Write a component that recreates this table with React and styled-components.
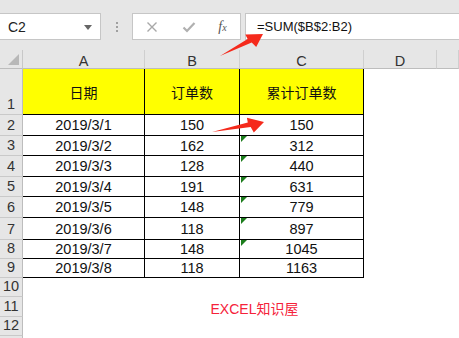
import React from 'react';
import styled, { createGlobalStyle, css } from 'styled-components';

const GlobalStyle = createGlobalStyle`
  html, body {
    margin: 0;
    padding: 0;
    background: #fff;
  }
`;

const FONT = `"Liberation Sans", "Noto Sans CJK SC", Arial, sans-serif`;
const COLS = [122, 95, 124, 73];
const ROW_HEIGHTS = [46, 21, 20, 21, 20, 21, 22, 19, 19, 19, 20, 19, 19];

const Page = styled.div`
  position: relative;
  width: 459px;
  height: 338px;
  overflow: hidden;
  background: #fff;
  font-family: ${FONT};
  color: #111;
`;

const Toolbar = styled.div`
  height: 50px;
  box-sizing: border-box;
  padding-top: 13px;
  background: #e6e6e6;
  display: flex;
  align-items: flex-start;
`;

const Box = styled.div`
  height: 27px;
  box-sizing: border-box;
  border: 1px solid #c6c6c6;
  background: #fff;
`;

const NameBox = styled(Box)`
  width: 102px;
  margin-left: -1px;
  display: flex;
  align-items: center;
  justify-content: space-between;
  padding: 0 8px 0 8px;
  font-size: 14px;
  color: #222;
`;

const DropArrow = styled.span`
  width: 0;
  height: 0;
  border-left: 4px solid transparent;
  border-right: 4px solid transparent;
  border-top: 5px solid #666;
  margin-top: 1px;
`;

const Grip = styled.div`
  width: 2px;
  margin: 9px 14px 0 15px;
  display: flex;
  flex-direction: column;
  gap: 2px;

  span {
    width: 2px;
    height: 2px;
    background: #a0a0a0;
  }
`;

const ButtonBox = styled(Box)`
  width: 109px;
  display: grid;
  grid-template-columns: 38px 36px 1fr;
  align-items: center;
  justify-items: center;
`;

const FxLabel = styled.span`
  font-family: "Liberation Serif", "DejaVu Serif", serif;
  font-style: italic;
  font-size: 14px;
  color: #555;
  margin-right: 2px;

  sub {
    font-size: 10px;
    vertical-align: 0;
  }
`;

const FormulaBox = styled(Box)`
  flex: 1;
  margin-left: 4px;
  margin-right: -2px;
  display: flex;
  align-items: center;
  padding-left: 11px;
  font-size: 13px;
  color: #111;
`;

const Sheet = styled.div`
  display: grid;
  grid-template-columns: 23px ${COLS.map((c) => `${c}px`).join(' ')} 1fr;
  grid-template-rows: 19px ${ROW_HEIGHTS.map((h) => `${h}px`).join(' ')};
`;

const ColHead = styled.div`
  position: relative;
  box-sizing: border-box;
  background: #e6e6e6;
  border-bottom: 1px solid #bdbdbd;
  border-right: 1px solid ${(p) => (p.$corner ? '#c8c8c8' : '#cfcfcf')};
  display: flex;
  align-items: center;
  justify-content: center;
  padding-top: 3px;
  font-size: 14.5px;
  color: #333;

  ${(p) =>
    p.$corner &&
    css`
      &::after {
        content: '';
        position: absolute;
        right: 3px;
        bottom: 3px;
        border-left: 11px solid transparent;
        border-bottom: 11px solid #b8b8b8;
      }
    `}
`;

const RowHead = styled.div`
  box-sizing: border-box;
  background: #e6e6e6;
  border-right: 1px solid #bdbdbd;
  border-bottom: 1px solid #c9c9c9;
  display: flex;
  align-items: flex-end;
  justify-content: center;
  padding-bottom: 1px;
  font-size: 14.5px;
  line-height: 17px;
  color: #333;
`;

const Cell = styled.div`
  position: relative;
  box-sizing: border-box;
  display: flex;
  align-items: center;
  justify-content: center;
  font-size: ${(p) => (p.$yellow ? '14px' : '14.5px')};
  color: #111;
  white-space: nowrap;
  background: ${(p) => (p.$yellow ? '#ffff00' : '#fff')};
  grid-column: ${(p) => (p.$span ? `span ${p.$span}` : 'auto')};

  ${(p) =>
    p.$bordered &&
    css`
      border-right: 1px solid #000;
      border-bottom: 1px solid #000;
    `}

  ${(p) =>
    p.$mark &&
    css`
      &::before {
        content: '';
        position: absolute;
        left: 1px;
        top: 0;
        border-top: 6px solid #1c7d1c;
        border-right: 6px solid transparent;
      }
    `}
`;

const Watermark = styled(Cell)`
  color: #f5223a;
  font-size: 14px;
  padding-top: 1px;
`;

const Overlay = styled.svg`
  position: absolute;
  left: 0;
  top: 0;
  pointer-events: none;
`;

const data = [
  ['2019/3/1', 150, 150],
  ['2019/3/2', 162, 312],
  ['2019/3/3', 128, 440],
  ['2019/3/4', 191, 631],
  ['2019/3/5', 148, 779],
  ['2019/3/6', 118, 897],
  ['2019/3/7', 148, 1045],
  ['2019/3/8', 118, 1163],
];

const arrowPoints = (x1, y1, x2, y2) => {
  const dx = x2 - x1;
  const dy = y2 - y1;
  const L = Math.hypot(dx, dy);
  const ux = dx / L;
  const uy = dy / L;
  const nx = -uy;
  const ny = ux;
  const local = [
    [0, 0],
    [L - 16, -2.5],
    [L - 16, -7.5],
    [L, 0],
    [L - 12, 8.5],
    [L - 14, 2.5],
  ];
  return local
    .map(([a, b]) => `${(x1 + ux * a + nx * b).toFixed(1)},${(y1 + uy * a + ny * b).toFixed(1)}`)
    .join(' ');
};

const EmptyRow = ({ n, children }) => (
  <>
    <RowHead>{n}</RowHead>
    {children || (
      <>
        <Cell />
        <Cell />
        <Cell />
      </>
    )}
    <Cell />
    <Cell />
  </>
);

const App = () => {
  return (
    <Page>
      <GlobalStyle />
      <Toolbar>
        <NameBox>
          <span>C2</span>
          <DropArrow />
        </NameBox>
        <Grip>
          <span />
          <span />
          <span />
        </Grip>
        <ButtonBox>
          <svg width="12" height="12" viewBox="0 0 12 12">
            <path d="M1.5 1.5 L10.5 10.5 M10.5 1.5 L1.5 10.5" stroke="#a8a8a8" strokeWidth="1.4" fill="none" />
          </svg>
          <svg width="14" height="12" viewBox="0 0 14 12">
            <path d="M1.5 6.5 L5 10 L12.5 2" stroke="#b0b0b0" strokeWidth="2.2" fill="none" />
          </svg>
          <FxLabel>
            f<sub>x</sub>
          </FxLabel>
        </ButtonBox>
        <FormulaBox>=SUM($B$2:B2)</FormulaBox>
      </Toolbar>

      <Sheet>
        <ColHead $corner />
        <ColHead>A</ColHead>
        <ColHead>B</ColHead>
        <ColHead>C</ColHead>
        <ColHead>D</ColHead>
        <ColHead />

        <RowHead>1</RowHead>
        <Cell $yellow $bordered>日期</Cell>
        <Cell $yellow $bordered>订单数</Cell>
        <Cell $yellow $bordered>累计订单数</Cell>
        <Cell />
        <Cell />

        {data.map(([date, orders, total], i) => (
          <React.Fragment key={date}>
            <RowHead>{i + 2}</RowHead>
            <Cell $bordered>{date}</Cell>
            <Cell $bordered>{orders}</Cell>
            <Cell $bordered $mark={i > 0 && i < 7}>
              {total}
            </Cell>
            <Cell />
            <Cell />
          </React.Fragment>
        ))}

        <EmptyRow n={10} />
        <EmptyRow n={11}>
          <Cell />
          <Watermark $span={2}>EXCEL知识屋</Watermark>
        </EmptyRow>
        <EmptyRow n={12} />
        <EmptyRow />
      </Sheet>

      <Overlay width="459" height="338">
        <polygon points={arrowPoints(220, 56, 263, 34)} fill="#f52a1c" />
        <polygon points={arrowPoints(212, 132, 264, 122)} fill="#f52a1c" />
      </Overlay>
    </Page>
  );
};

export default App;
